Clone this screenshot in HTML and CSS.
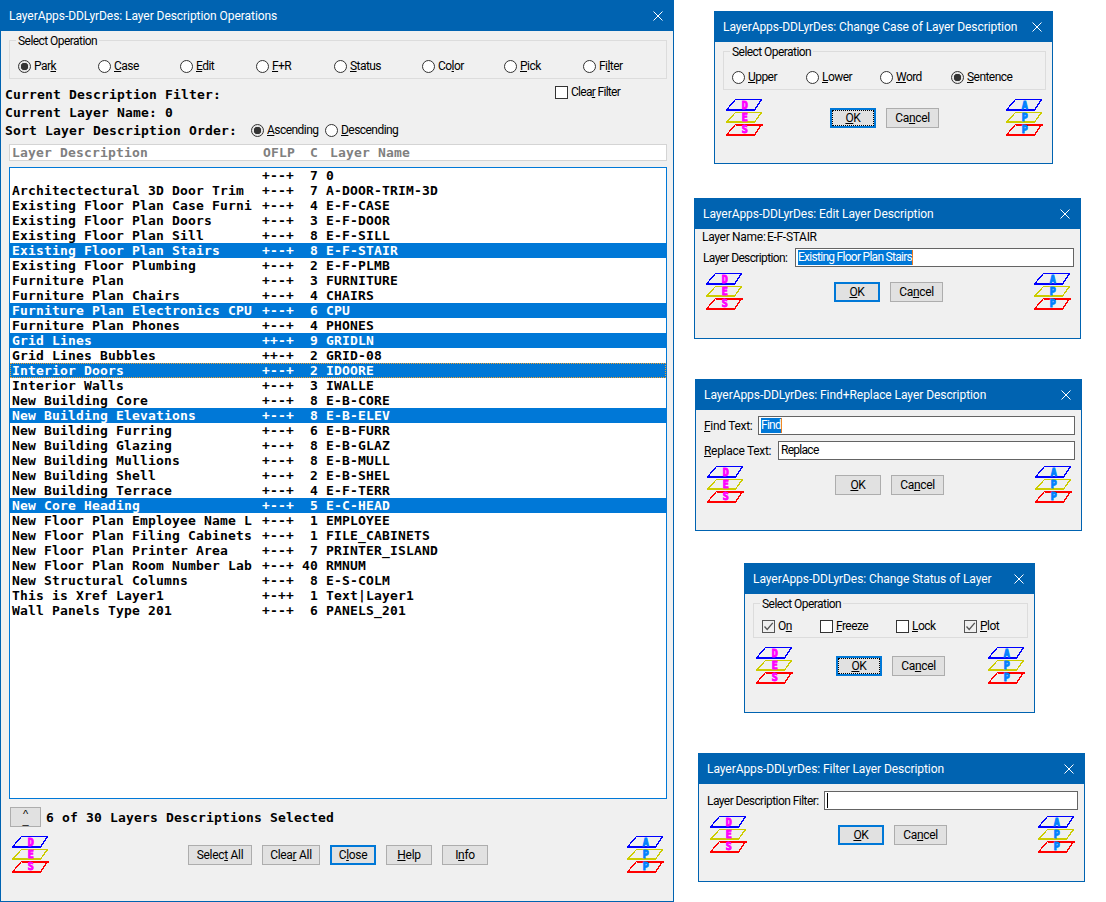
FILE: index.html
```html
<!DOCTYPE html>
<html lang="en">
<head>
<meta charset="utf-8">
<title>LayerApps-DDLyrDes</title>
<link rel="stylesheet" href="styles.css">
</head>
<body>
<svg class="defs" aria-hidden="true">
  <symbol id="layers" viewBox="0 0 37 37">
    <g class="layer-lines" fill="none" shape-rendering="crispEdges">
      <path d="M.5 11 9.5.5h26L28.5 11" stroke="#0000ff"/>
      <path d="M.5 23 9.5 13.5h26L28.5 23" stroke="#cccc00"/>
      <path d="M.5 36 9.5 25.5h26L28.5 36" stroke="#ff0000"/>
    </g>
    <rect y="10" width="29" height="2" fill="#0000ff"/>
    <rect y="22" width="29" height="2" fill="#cccc00"/>
    <rect x="10" y="25" width="27" height="2" fill="#ff0000"/>
    <rect y="35" width="29" height="2" fill="#ff0000"/>
  </symbol>
  <symbol id="ico-des" viewBox="0 0 37 37">
    <use href="#layers"/>
    <g class="ico-letters des"><text x="18.5" y="10">D</text><text x="18.5" y="22">E</text><text x="18.5" y="34">S</text></g>
  </symbol>
  <symbol id="ico-app" viewBox="0 0 37 37">
    <use href="#layers"/>
    <g class="ico-letters app"><text x="18.5" y="10">A</text><text x="18.5" y="22">P</text><text x="18.5" y="34">P</text></g>
  </symbol>
  <symbol id="ico-x" viewBox="0 0 10 10">
    <path d="M.5.5l9 9M9.5.5l-9 9" stroke="#fff" fill="none"/>
  </symbol>
  <symbol id="ico-tick" viewBox="0 0 11 11">
    <path d="M1.5 5.5 4.2 8.5 9.8 1.8" stroke="#555" stroke-width="1.3" fill="none"/>
  </symbol>
</svg>

<section class="win win-main">
  <header class="title"><span>LayerApps-DDLyrDes: Layer Description Operations</span><svg class="x"><use href="#ico-x"/></svg></header>
  <div class="group group-main">
    <span class="legend">Select Operation</span>
    <div class="opts opts-main">
      <label class="opt"><i class="radio on"></i><span>Par<u>k</u></span></label>
      <label class="opt"><i class="radio"></i><span><u>C</u>ase</span></label>
      <label class="opt"><i class="radio"></i><span><u>E</u>dit</span></label>
      <label class="opt"><i class="radio"></i><span><u>F</u>+R</span></label>
      <label class="opt"><i class="radio"></i><span><u>S</u>tatus</span></label>
      <label class="opt"><i class="radio"></i><span>Co<u>l</u>or</span></label>
      <label class="opt"><i class="radio"></i><span><u>P</u>ick</span></label>
      <label class="opt"><i class="radio"></i><span>Fi<u>l</u>ter</span></label>
    </div>
  </div>
  <div class="line line-first">
    <span class="mono">Current Description Filter:</span>
    <label class="opt opt-clear"><i class="check"></i><span>Clea<u>r</u> Filter</span></label>
  </div>
  <div class="line"><span class="mono">Current Layer Name: 0</span></div>
  <div class="line">
    <span class="mono">Sort Layer Description Order:</span>
    <label class="opt opt-asc"><i class="radio on"></i><span><u>A</u>scending</span></label>
    <label class="opt"><i class="radio"></i><span><u>D</u>escending</span></label>
  </div>
  <div class="list-head mono"><span class="h-desc">Layer Description</span><span class="h-flags">OFLP</span><span class="h-c">C</span><span class="h-name">Layer Name</span></div>
  <div class="list mono">
    <div class="row"><span></span><span>+--+</span><span class="c">7</span><span class="n">0</span></div>
    <div class="row"><span>Architectectural 3D Door Trim</span><span>+--+</span><span class="c">7</span><span class="n">A-DOOR-TRIM-3D</span></div>
    <div class="row"><span>Existing Floor Plan Case Furni</span><span>+--+</span><span class="c">4</span><span class="n">E-F-CASE</span></div>
    <div class="row"><span>Existing Floor Plan Doors</span><span>+--+</span><span class="c">3</span><span class="n">E-F-DOOR</span></div>
    <div class="row"><span>Existing Floor Plan Sill</span><span>+--+</span><span class="c">8</span><span class="n">E-F-SILL</span></div>
    <div class="row sel"><span>Existing Floor Plan Stairs</span><span>+--+</span><span class="c">8</span><span class="n">E-F-STAIR</span></div>
    <div class="row"><span>Existing Floor Plumbing</span><span>+--+</span><span class="c">2</span><span class="n">E-F-PLMB</span></div>
    <div class="row"><span>Furniture Plan</span><span>+--+</span><span class="c">3</span><span class="n">FURNITURE</span></div>
    <div class="row"><span>Furniture Plan Chairs</span><span>+--+</span><span class="c">4</span><span class="n">CHAIRS</span></div>
    <div class="row sel"><span>Furniture Plan Electronics CPU</span><span>+--+</span><span class="c">6</span><span class="n">CPU</span></div>
    <div class="row"><span>Furniture Plan Phones</span><span>+--+</span><span class="c">4</span><span class="n">PHONES</span></div>
    <div class="row sel"><span>Grid Lines</span><span>++-+</span><span class="c">9</span><span class="n">GRIDLN</span></div>
    <div class="row"><span>Grid Lines Bubbles</span><span>++-+</span><span class="c">2</span><span class="n">GRID-08</span></div>
    <div class="row sel focus"><span>Interior Doors</span><span>+--+</span><span class="c">2</span><span class="n">IDOORE</span></div>
    <div class="row"><span>Interior Walls</span><span>+--+</span><span class="c">3</span><span class="n">IWALLE</span></div>
    <div class="row"><span>New Building Core</span><span>+--+</span><span class="c">8</span><span class="n">E-B-CORE</span></div>
    <div class="row sel"><span>New Building Elevations</span><span>+--+</span><span class="c">8</span><span class="n">E-B-ELEV</span></div>
    <div class="row"><span>New Building Furring</span><span>+--+</span><span class="c">6</span><span class="n">E-B-FURR</span></div>
    <div class="row"><span>New Building Glazing</span><span>+--+</span><span class="c">8</span><span class="n">E-B-GLAZ</span></div>
    <div class="row"><span>New Building Mullions</span><span>+--+</span><span class="c">8</span><span class="n">E-B-MULL</span></div>
    <div class="row"><span>New Building Shell</span><span>+--+</span><span class="c">2</span><span class="n">E-B-SHEL</span></div>
    <div class="row"><span>New Building Terrace</span><span>+--+</span><span class="c">4</span><span class="n">E-F-TERR</span></div>
    <div class="row sel"><span>New Core Heading</span><span>+--+</span><span class="c">5</span><span class="n">E-C-HEAD</span></div>
    <div class="row"><span>New Floor Plan Employee Name L</span><span>+--+</span><span class="c">1</span><span class="n">EMPLOYEE</span></div>
    <div class="row"><span>New Floor Plan Filing Cabinets</span><span>+--+</span><span class="c">1</span><span class="n">FILE_CABINETS</span></div>
    <div class="row"><span>New Floor Plan Printer Area</span><span>+--+</span><span class="c">7</span><span class="n">PRINTER_ISLAND</span></div>
    <div class="row"><span>New Floor Plan Room Number Lab</span><span>+--+</span><span class="c">40</span><span class="n">RMNUM</span></div>
    <div class="row"><span>New Structural Columns</span><span>+--+</span><span class="c">8</span><span class="n">E-S-COLM</span></div>
    <div class="row"><span>This is Xref Layer1</span><span>+-++</span><span class="c">1</span><span class="n">Text|Layer1</span></div>
    <div class="row"><span>Wall Panels Type 201</span><span>+--+</span><span class="c">6</span><span class="n">PANELS_201</span></div>
  </div>
  <div class="status">
    <button class="btn btn-up"><span>^</span><span>_</span></button>
    <span class="mono">6 of 30 Layers Descriptions Selected</span>
  </div>
  <div class="iconrow iconrow-main">
    <svg class="ico"><use href="#ico-des"/></svg>
    <div class="btns">
      <button class="btn w64">Selec<u>t</u> All</button>
      <button class="btn w58">Clea<u>r</u> All</button>
      <button class="btn def w46">C<u>l</u>ose</button>
      <button class="btn w46"><u>H</u>elp</button>
      <button class="btn w46">I<u>n</u>fo</button>
    </div>
    <svg class="ico"><use href="#ico-app"/></svg>
  </div>
</section>

<section class="win win-case">
  <header class="title"><span>LayerApps-DDLyrDes: Change Case of Layer Description</span><svg class="x"><use href="#ico-x"/></svg></header>
  <div class="group group-main">
    <span class="legend">Select Operation</span>
    <div class="opts opts-case">
      <label class="opt"><i class="radio"></i><span><u>U</u>pper</span></label>
      <label class="opt"><i class="radio"></i><span><u>L</u>ower</span></label>
      <label class="opt"><i class="radio"></i><span><u>W</u>ord</span></label>
      <label class="opt"><i class="radio on"></i><span><u>S</u>entence</span></label>
    </div>
  </div>
  <div class="iconrow">
    <svg class="ico"><use href="#ico-des"/></svg>
    <div class="btns"><button class="btn def dotted w46"><u>O</u>K</button><button class="btn w53">Ca<u>n</u>cel</button></div>
    <svg class="ico"><use href="#ico-app"/></svg>
  </div>
</section>

<section class="win win-edit">
  <header class="title"><span>LayerApps-DDLyrDes: Edit Layer Description</span><svg class="x"><use href="#ico-x"/></svg></header>
  <div class="name-row"><span class="name-label">Layer Name:</span><span>E-F-STAIR</span></div>
  <div class="field field-edit">
    <span class="field-label w-edit">Layer Description:</span>
    <div class="input"><span class="picked">Existing Floor Plan Stairs</span></div>
  </div>
  <div class="iconrow iconrow-tight">
    <svg class="ico"><use href="#ico-des"/></svg>
    <div class="btns"><button class="btn def w46"><u>O</u>K</button><button class="btn w53">Ca<u>n</u>cel</button></div>
    <svg class="ico"><use href="#ico-app"/></svg>
  </div>
</section>

<section class="win win-find">
  <header class="title"><span>LayerApps-DDLyrDes: Find+Replace Layer Description</span><svg class="x"><use href="#ico-x"/></svg></header>
  <div class="field field-find">
    <span class="field-label w-find"><u>F</u>ind Text:</span>
    <div class="input"><span class="picked">Find</span></div>
  </div>
  <div class="field field-find">
    <span class="field-label w-repl"><u>R</u>eplace Text:</span>
    <div class="input">Replace</div>
  </div>
  <div class="iconrow iconrow-tight">
    <svg class="ico"><use href="#ico-des"/></svg>
    <div class="btns"><button class="btn w46"><u>O</u>K</button><button class="btn w53">Ca<u>n</u>cel</button></div>
    <svg class="ico"><use href="#ico-app"/></svg>
  </div>
</section>

<section class="win win-status">
  <header class="title"><span>LayerApps-DDLyrDes: Change Status of Layer</span><svg class="x"><use href="#ico-x"/></svg></header>
  <div class="group group-status">
    <span class="legend">Select Operation</span>
    <div class="opts opts-status">
      <label class="opt"><i class="check on"><svg class="tick"><use href="#ico-tick"/></svg></i><span>O<u>n</u></span></label>
      <label class="opt"><i class="check"></i><span><u>F</u>reeze</span></label>
      <label class="opt"><i class="check"></i><span><u>L</u>ock</span></label>
      <label class="opt"><i class="check on"><svg class="tick"><use href="#ico-tick"/></svg></i><span><u>P</u>lot</span></label>
    </div>
  </div>
  <div class="iconrow">
    <svg class="ico"><use href="#ico-des"/></svg>
    <div class="btns"><button class="btn def dotted w46"><u>O</u>K</button><button class="btn w53">Ca<u>n</u>cel</button></div>
    <svg class="ico"><use href="#ico-app"/></svg>
  </div>
</section>

<section class="win win-filter">
  <header class="title"><span>LayerApps-DDLyrDes: Filter Layer Description</span><svg class="x"><use href="#ico-x"/></svg></header>
  <div class="field field-filter">
    <span class="field-label w-filter">Layer Description Filter:</span>
    <div class="input"><i class="caret"></i></div>
  </div>
  <div class="iconrow iconrow-tight">
    <svg class="ico"><use href="#ico-des"/></svg>
    <div class="btns"><button class="btn def w46"><u>O</u>K</button><button class="btn w53">Ca<u>n</u>cel</button></div>
    <svg class="ico"><use href="#ico-app"/></svg>
  </div>
</section>
</body>
</html>
```
FILE: styles.css
```css
* { box-sizing: border-box; }
html, body { margin: 0; padding: 0; }
body {
  position: relative;
  width: 1106px;
  height: 902px;
  overflow: hidden;
  background: #fff;
  color: #000;
  font: 12px/15px Roboto, "Liberation Sans", sans-serif;
  letter-spacing: -.55px;
}
.defs { display: none; }

.win {
  position: absolute;
  background: #f0f0f0;
  border: 1px solid #0063b1;
  display: flex;
  flex-direction: column;
}
.win-main { left: 0; top: 0; width: 674px; height: 902px; }
.win-case { left: 714px; top: 11px; width: 339px; height: 153px; }
.win-edit { left: 694px; top: 198px; width: 387px; height: 141px; }
.win-find { left: 695px; top: 379px; width: 387px; height: 152px; }
.win-status { left: 744px; top: 563px; width: 291px; height: 150px; }
.win-filter { left: 698px; top: 753px; width: 387px; height: 129px; }

.title {
  height: 30px;
  flex: none;
  display: flex;
  align-items: center;
  justify-content: space-between;
  padding: 0 10px 0 8px;
  background: #0063b1;
  color: #fff;
  font: 12px/16px Roboto, sans-serif;
  letter-spacing: -.06px;
  white-space: nowrap;
}
.x { width: 10px; height: 10px; }

.group {
  position: relative;
  margin: 9px 6px 0 8px;
  border: 1px solid #dcdcdc;
  padding-left: 8px;
  flex: none;
}
.group-main { height: 39px; padding-top: 18px; }
.group-status { height: 35px; padding-top: 15px; }
.legend {
  position: absolute;
  left: 6px;
  top: -7px;
  padding: 0 2px;
  background: #f0f0f0;
}
.opts { display: grid; }
.opts-main { grid-template-columns: 80px 82px 76px 78px 88px 82px 79px auto; }
.opts-case { grid-template-columns: 74px 74px 71px auto; }
.opts-status { grid-template-columns: 58px 76px 68px auto; }

.opt { display: flex; align-items: center; height: 15px; white-space: nowrap; }
.radio {
  flex: none;
  width: 13px;
  height: 13px;
  margin-right: 3px;
  border: 1px solid #333;
  border-radius: 50%;
  background: #fff;
}
.radio.on {
  background: radial-gradient(circle, #333 0 3.5px, #e6e6e6 4px);
}
.check {
  flex: none;
  display: block;
  width: 13px;
  height: 13px;
  margin-right: 3px;
  border: 1px solid #333;
  background: #fff;
}
.check.on { background: #f0f0f0; border-color: #555; }
.tick { display: block; width: 11px; height: 11px; }

.mono {
  font: bold 13px/15px "DejaVu Sans Mono", "Liberation Mono", monospace;
  letter-spacing: .174px;
}
.line .mono, .status .mono, .row span, .list-head span { white-space: pre; }
.line {
  height: 18px;
  flex: none;
  display: flex;
  align-items: center;
  padding-left: 4px;
}
.line-first { margin-top: 6px; }
.opt-clear { margin-left: auto; width: 118px; align-self: flex-start; letter-spacing: -.7px; }
.opt-asc { margin-left: 14px; width: 74px; }

.list-head {
  flex: none;
  display: flex;
  height: 17px;
  margin: 5px 6px 0 8px;
  padding: 0 0 0 2px;
  align-items: center;
  background: #fff;
  border: 1px solid #d4d4d4;
  color: #808080;
}
.h-desc { width: 251px; }
.h-flags { width: 47px; }
.h-c { width: 20px; }

.list {
  flex: none;
  height: 632px;
  margin: 6px 6px 0 8px;
  background: #fff;
  border: 1px solid #0078d7;
}
.row {
  display: grid;
  grid-template-columns: 250px 32px 24px auto;
  height: 15px;
  padding-left: 2px;
}
.row .c { text-align: right; }
.row .n { padding-left: 8px; }
.row.sel { background: #0078d7; color: #fff; }
.row.focus { outline: 1px dotted #f0a030; outline-offset: -1px; }

.status {
  flex: none;
  display: flex;
  align-items: center;
  height: 20px;
  margin: 8px 0 0 9px;
}
.status .mono { margin-left: 5px; }

.btn {
  display: block;
  height: 20px;
  padding: 0;
  background: #e1e1e1;
  border: 1px solid #adadad;
  color: #000;
  font: inherit;
  letter-spacing: -.3px;
  text-align: center;
}
.btn.def { border: 2px solid #0078d7; }
.btn.dotted { outline: 1px dotted #000; outline-offset: -3px; }
.btn-up {
  width: 31px;
  display: flex;
  flex-direction: column;
  align-items: center;
  justify-content: center;
  font: 11px/8px "Liberation Sans", sans-serif;
}
.btn-up span:last-child { margin-top: -2px; }
.w46 { width: 46px; }
.w53 { width: 53px; }
.w58 { width: 58px; }
.w64 { width: 64px; }

.iconrow {
  flex: none;
  display: flex;
  align-items: flex-start;
  justify-content: space-between;
  margin: 9px 9px 0 11px;
}
.iconrow-tight { margin-top: 6px; }
.btns { display: flex; gap: 10px; margin-top: 9px; }
.ico { width: 37px; height: 37px; display: block; flex: none; }
.layer-lines path { stroke-width: 1.3px; }
.ico-letters text {
  font: bold 10px "DejaVu Sans Mono", monospace;
  text-anchor: middle;
  stroke-width: .9px;
}
.ico-letters.des text { fill: #ff00ff; stroke: #ff00ff; }
.ico-letters.app text { fill: #0080ff; stroke: #0080ff; }

.name-row { display: flex; height: 16px; align-items: center; padding-left: 7px; white-space: nowrap; letter-spacing: -.3px; }
.name-label { width: 65px; }
.field { display: flex; align-items: center; margin-right: 6px; padding-left: 8px; flex: none; }
.field-edit { margin-top: 3px; }
.field-find { margin-top: 6px; letter-spacing: -.3px; }
.field-filter { margin-top: 7px; }
.field-label { flex: none; white-space: nowrap; padding-top: 2px; }
.w-edit { width: 92px; letter-spacing: -.63px; }
.w-find { width: 54px; }
.w-repl { width: 74px; }
.w-filter { width: 117px; }
.input {
  flex: 1;
  height: 19px;
  padding: 1px 2px;
  line-height: 15px;
  background: #fff;
  border: 1px solid #646464;
  white-space: nowrap;
  letter-spacing: -.72px;
}
.picked {
  display: inline-block;
  height: 15px;
  background: #0078d7;
  border-right: 1px solid #e87a20;
  color: #fff;
}
.caret { display: block; width: 1px; height: 15px; background: #000; }
```
